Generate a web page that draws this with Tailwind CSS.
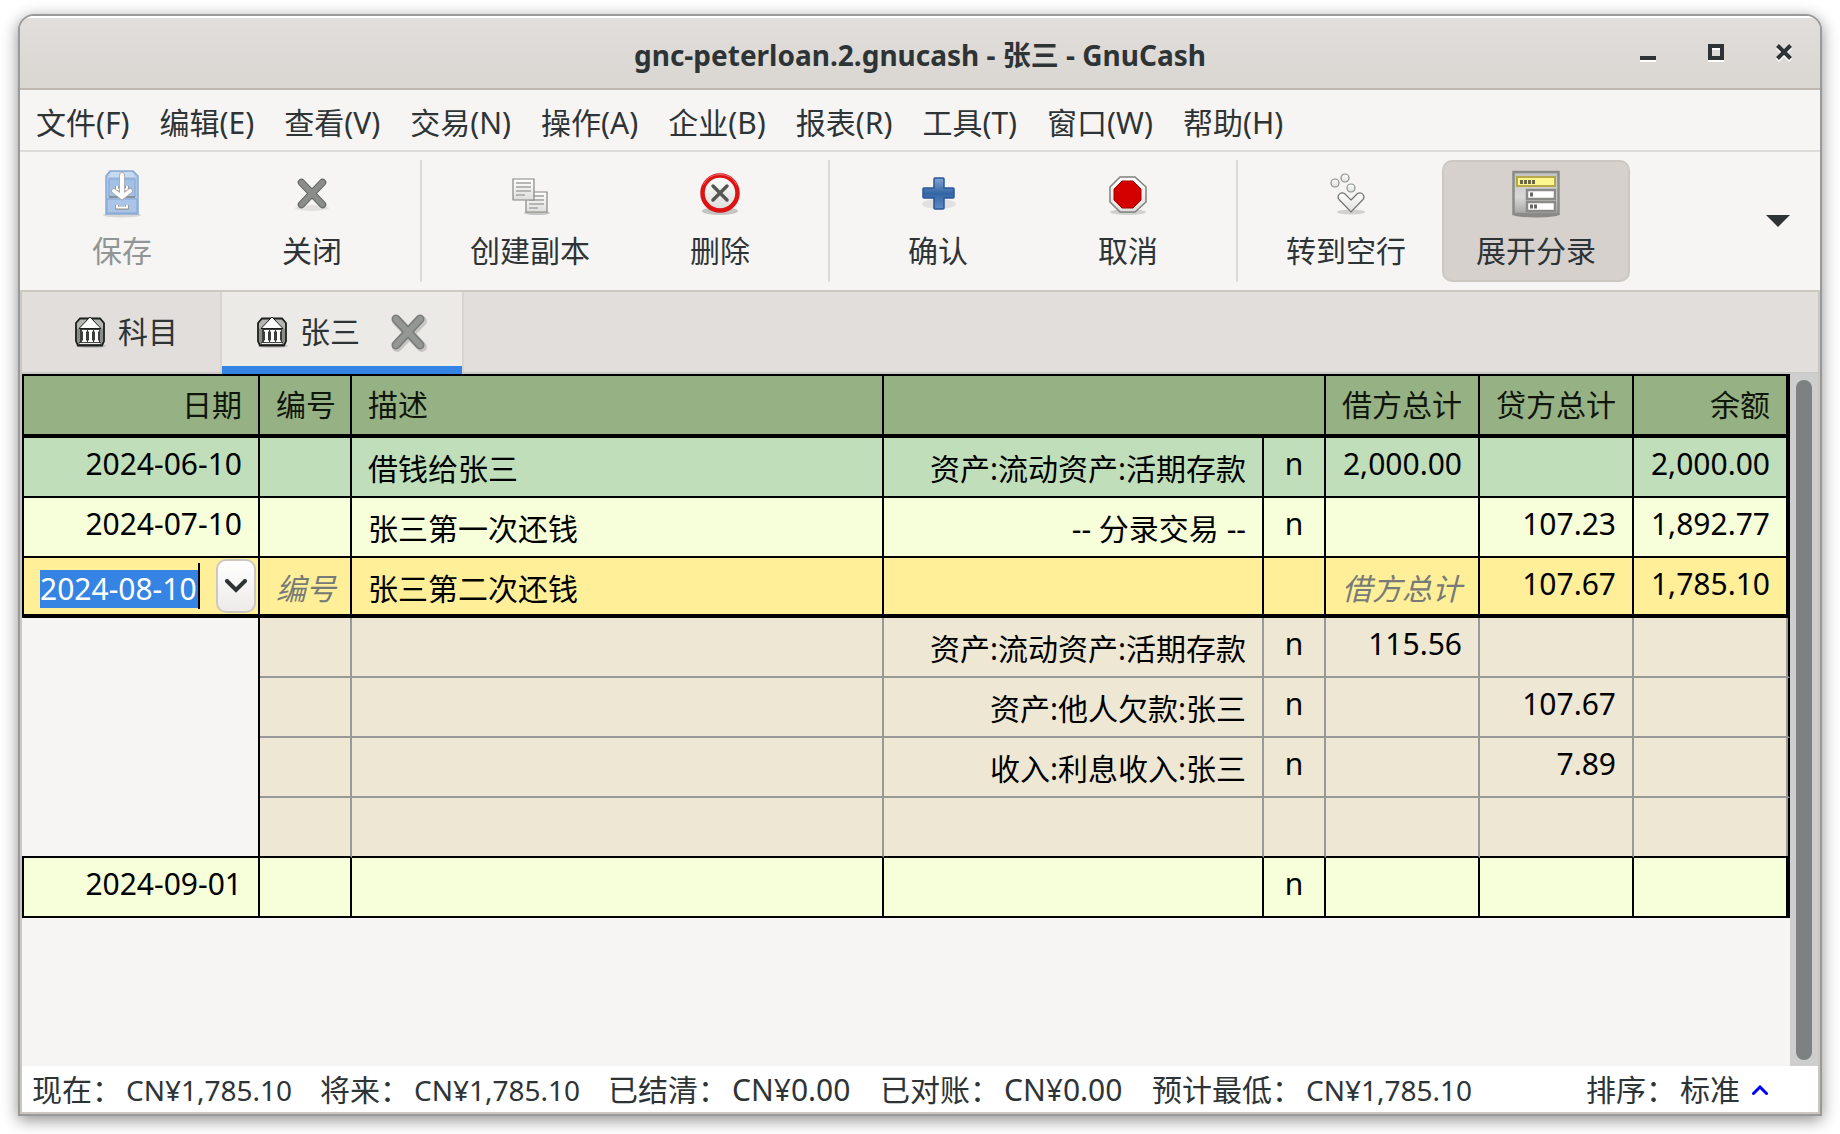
<!DOCTYPE html>
<html lang="zh-CN">
<head>
<meta charset="utf-8">
<title>gnc-peterloan.2.gnucash - 张三 - GnuCash</title>
<script src="https://cdn.jsdelivr.net/npm/@tailwindcss/browser@4"></script>
</head>
<body class="bg-white font-['Noto_Sans','Noto_Sans_CJK_SC',sans-serif] text-[30px] leading-10 text-[#2e3436]">
<svg class="absolute size-0" aria-hidden="true">
  <defs>
    <linearGradient id="gp" x1="0" y1="0" x2="0" y2="1"><stop offset="0" stop-color="#83a6d4"/><stop offset=".5" stop-color="#3465a4"/><stop offset="1" stop-color="#5d8ac4"/></linearGradient>
    <linearGradient id="gg" x1="0" y1="0" x2="0" y2="1"><stop offset="0" stop-color="#fff"/><stop offset="1" stop-color="#dededc"/></linearGradient>
    <linearGradient id="gs" x1="0" y1="0" x2="0" y2="1"><stop offset="0" stop-color="#c2c3c1"/><stop offset=".6" stop-color="#d8d9d7"/><stop offset="1" stop-color="#a5a6a4"/></linearGradient>
    <symbol id="bank" viewBox="0 0 32 32">
      <ellipse cx="17" cy="30" rx="15" ry="2" fill="#000" opacity=".15"/>
      <path d="M6 2.500H26L30 7V25L28 29.500H4L2 25V7Z" fill="#b4b6b1" stroke="#1c1e1c" stroke-width="1.800"/>
      <path d="M3 13H29V26H3Z" fill="#3c3e3b"/>
      <path d="M3 13H6V26H3ZM26 13H29V26H26Z" fill="#8a8c87"/>
      <path d="M16 1L27 12.500H5Z" fill="#fff" stroke="#1c1e1c" stroke-width="1"/>
      <path d="M8 14H13V15.500H12V24.500H13V26H8V24.500H9V15.500H8ZM14 14H19V15.500H18V24.500H19V26H14V24.500H15V15.500H14ZM20 14H25V15.500H24V24.500H25V26H20V24.500H21V15.500H20Z" fill="#fff"/>
      <path d="M5 26.500H27V28.500H5Z" fill="#eee" stroke="#1c1e1c" stroke-width=".8"/>
    </symbol>
  </defs>
</svg>
<div class="min-h-screen flex px-[18px] pt-[14px] pb-[18px]">
  <div class="flex-1 min-w-0 flex flex-col border-2 border-[#999] rounded-t-2xl overflow-hidden bg-[#f6f5f4] shadow-[0_4px_16px_rgba(0,0,0,0.45)]">
    <header class="h-[74px] shrink-0 grid grid-cols-[1fr_auto_1fr] items-center border-t-2 border-t-white border-b-2 border-b-[#bfb8b1] bg-linear-to-b from-[#e1dedb] to-[#dad6d2]">
      <span></span>
      <h1 class="text-[28px] font-bold pt-1">gnc-peterloan.2.gnucash - 张三 - GnuCash</h1>
      <div class="flex justify-end gap-9 pr-5">
        <button aria-label="最小化" class="size-8 grid place-items-center"><svg width="16" height="18" viewBox="0 0 16 18"><path d="M0 14H16V18H0Z" fill="#fff"/><path d="M0 12H16V16H0Z" fill="#2e3436"/></svg></button>
        <button aria-label="最大化" class="size-8 grid place-items-center"><svg width="16" height="18" viewBox="0 0 16 18"><path d="M2 4H14V16H2Z" fill="none" stroke="#fff" stroke-width="4"/><path d="M2 2H14V14H2Z" fill="none" stroke="#2e3436" stroke-width="4"/></svg></button>
        <button aria-label="关闭窗口" class="size-8 grid place-items-center"><svg width="16" height="18" viewBox="0 0 16 18"><path d="M1.500 3.500L14.500 16.500M14.500 3.500L1.500 16.500" stroke="#fff" stroke-width="4"/><path d="M1.500 1.500L14.500 14.500M14.500 1.500L1.500 14.500" stroke="#2e3436" stroke-width="4"/></svg></button>
      </div>
    </header>
    <nav class="h-[62px] shrink-0 flex items-center gap-[30px] pl-4 pt-1.5 border-b-2 border-[#dddbd8] whitespace-nowrap">
      <button>文件(F)</button><button>编辑(E)</button><button>查看(V)</button><button>交易(N)</button><button>操作(A)</button><button>企业(B)</button><button>报表(R)</button><button>工具(T)</button><button>窗口(W)</button><button>帮助(H)</button>
    </nav>
    <div class="h-[140px] shrink-0 flex items-start gap-0.5 pl-2 pr-[30px] pt-2 border-b-2 border-[#cdc9c0] whitespace-nowrap">
      <button disabled class="w-[188px] h-[122px] flex flex-col items-center gap-[13px] pt-2.5 text-[#929595]">
        <svg width="48" height="48" viewBox="0 0 48 48"><ellipse cx="24" cy="45" rx="19" ry="2.500" fill="#000" opacity=".12"/><path d="M12 1H35L40 6V44H8V6Z" fill="#aac5e8" stroke="#8aaad4" stroke-width="1.500"/><path d="M13 2H34L38 7H10Z" fill="#c8daf0"/><path d="M11 9H37V27H11Z" fill="#a3c0e6" stroke="#86a7d3"/><path d="M11 27H37" stroke="#85909c" stroke-width="2"/><path d="M9 29H39V43H9Z" fill="#aac5e8" stroke="#86a7d3"/><path d="M19 16V20H29V16M19 35V38H29V35" fill="none" stroke="#918f88" stroke-width="3.500"/><path d="M19 16V19.500H29V16M19 35V37.500H29V35" fill="none" stroke="#fff" stroke-width="2"/><path d="M24 5V25M16 21L24 27L32 21" fill="none" stroke="#a9a8a3" stroke-width="5.500" stroke-linecap="round"/><path d="M24 5V25M16 21L24 27L32 21" fill="none" stroke="#fff" stroke-width="4" stroke-linecap="round"/></svg>
        <span>保存</span></button>
      <button class="w-[188px] h-[122px] flex flex-col items-center gap-[13px] pt-2.5">
        <svg width="48" height="48" viewBox="0 0 48 48"><ellipse cx="24" cy="38" rx="17" ry="3" fill="#000" opacity=".08"/><path d="M13.500 12.500L34.500 34.500M34.500 12.500L13.500 34.500" stroke="#5c5e5a" stroke-width="7.500" stroke-linecap="round"/><path d="M13.500 12.500L34.500 34.500M34.500 12.500L13.500 34.500" stroke="#8b8d89" stroke-width="5.500" stroke-linecap="round"/></svg>
        <span>关闭</span></button>
      <div class="w-0.5 h-[122px] mx-3 bg-[#dddbd8]"></div>
      <button class="w-[188px] h-[122px] flex flex-col items-center gap-[13px] pt-2.5">
        <svg width="48" height="48" viewBox="0 0 48 48"><ellipse cx="31" cy="43" rx="13" ry="2" fill="#000" opacity=".2"/><path d="M20 22H41V42H20Z" fill="url(#gg)" stroke="#85877f" stroke-width="1.200"/><path d="M23 26H38M23 30H38M23 34H38M23 38H32" stroke="#b5b6b3" stroke-width="2"/><path d="M7 9H28V30H7Z" fill="url(#gg)" stroke="#85877f" stroke-width="1.200"/><path d="M10 13H25M10 17H25M10 21H25M10 25H19" stroke="#b5b6b3" stroke-width="2"/></svg>
        <span>创建副本</span></button>
      <button class="w-[188px] h-[122px] flex flex-col items-center gap-[13px] pt-2.5">
        <svg width="48" height="48" viewBox="0 0 48 48"><ellipse cx="24" cy="41" rx="18" ry="4" fill="#000" opacity=".2"/><circle cx="24" cy="23" r="17.500" fill="url(#gg)" stroke="#dc1414" stroke-width="4.500"/><path d="M7 15A19 19 0 0 1 41 15" fill="none" stroke="#f06a6a" stroke-width="1"/><path d="M17 16L31 30M31 16L17 30" stroke="#555753" stroke-width="3.500" stroke-linecap="round"/></svg>
        <span>删除</span></button>
      <div class="w-0.5 h-[122px] mx-3 bg-[#dddbd8]"></div>
      <button class="w-[188px] h-[122px] flex flex-col items-center gap-[13px] pt-2.5">
        <svg width="48" height="48" viewBox="0 0 48 48"><ellipse cx="25" cy="34" rx="17" ry="5" fill="#000" opacity=".08"/><path d="M21 8H29Q30 8 30 9V18H39Q40 18 40 19V27Q40 28 39 28H30V38Q30 39 29 39H21Q20 39 20 38V28H10Q9 28 9 27V19Q9 18 10 18H20V9Q20 8 21 8Z" fill="url(#gp)" stroke="#2a5596" stroke-width="1.500"/></svg>
        <span>确认</span></button>
      <button class="w-[188px] h-[122px] flex flex-col items-center gap-[13px] pt-2.5">
        <svg width="48" height="48" viewBox="0 0 48 48"><ellipse cx="24" cy="42" rx="18" ry="3" fill="#000" opacity=".15"/><path d="M16 7H31L42 17V32L31 42H16L6 32V17Z" fill="url(#gg)" stroke="#7e807c" stroke-width="1.500"/><path d="M18 11H29L37 19V30L29 38H18L10 30V19Z" fill="#d40000" stroke="#a40000"/></svg>
        <span>取消</span></button>
      <div class="w-0.5 h-[122px] mx-3 bg-[#dddbd8]"></div>
      <button class="w-[188px] h-[122px] flex flex-col items-center gap-[13px] pt-2.5">
        <svg width="48" height="48" viewBox="0 0 48 48"><ellipse cx="29" cy="42" rx="14" ry="2.500" fill="#000" opacity=".15"/><g fill="url(#gg)" stroke="#8b8d89" stroke-width="1.200"><circle cx="13" cy="13" r="4"/><circle cx="23" cy="8" r="4"/><circle cx="29" cy="18" r="4"/><path d="M29 30L35.500 23.500Q39 22 41 24.500Q43 27 41 29.500L29 42L17 29.500Q15 27 17 24.500Q19 22 22.500 23.500Z" stroke="#6f716d"/></g></svg>
        <span>转到空行</span></button>
      <button aria-pressed="true" class="w-[188px] h-[122px] flex flex-col items-center gap-[13px] pt-2 rounded-[10px] border-2 border-[#cdc7c2] bg-[#d6d1cd]">
        <svg width="48" height="48" viewBox="0 0 48 48"><path d="M1 43H47L45 46Q24 49 3 46Z" fill="#000" opacity=".35"/><path d="M1.500 2H46.500V44H1.500Z" fill="url(#gs)" stroke="#8a8b89" stroke-width="2.500"/><path d="M5 7H43V16H5Z" fill="#fdf790" stroke="#b5a94c" stroke-width="2"/><path d="M15 20H43V29H15ZM15 32H43V41H15Z" fill="#fff" stroke="#8a8b89" stroke-width="2.500"/><path d="M8 12H24" stroke="#6b6840" stroke-width="4" stroke-dasharray="3 1"/><path d="M18 24.500H22M18 36.500H26" stroke="#666" stroke-width="4" stroke-dasharray="3 1"/></svg>
        <span>展开分录</span></button>
      <button aria-label="更多工具" class="ml-auto h-[122px] flex items-center"><svg width="24" height="12" viewBox="0 0 24 12"><path d="M0 0H24L12 12Z" fill="#2e3436"/></svg></button>
    </div>
    <div class="flex-1 flex flex-col border-x-2 border-b-2 border-[#cdc7c2]">
      <div role="tablist" class="h-[82px] shrink-0 flex bg-[#e1dedb] border-b-2 border-[#cdc9c4]">
        <button role="tab" class="w-[200px] h-20 flex items-center gap-3 pl-[52px] border-r-2 border-[#d8d4d0]"><svg width="32" height="32"><use href="#bank"/></svg><span>科目</span></button>
        <div role="tab" aria-selected="true" class="w-[240px] h-[82px] flex items-center gap-3 pl-[34px] pt-1.5 bg-[#ebeae6] border-b-8 border-[#3584e4]">
          <svg width="32" height="32"><use href="#bank"/></svg><span>张三</span>
          <button aria-label="关闭标签" class="ml-4"><svg width="40" height="40" viewBox="0 0 40 40"><path d="M9 9L34 35M34 9L9 35" stroke="#000" opacity=".15" stroke-width="10" stroke-linecap="round"/><path d="M8 7L32 33M32 7L8 33" stroke="#777976" stroke-width="9" stroke-linecap="round"/><path d="M8 7L32 33M32 7L8 33" stroke="#959794" stroke-width="6" stroke-linecap="round"/></svg></button>
        </div>
        <div class="w-0.5 h-20 bg-[#d8d4d0]"></div>
      </div>
      <div class="flex-1 flex">
        <div class="flex-1 min-w-0">
          <table class="w-full table-fixed border-separate border-spacing-0 text-black whitespace-nowrap [&_tr]:h-[60px] [&_td]:p-0 [&_td]:px-4 [&_td]:align-top [&_td]:border-black [&_td]:border-r-2 [&_td]:border-b-2 [&_.split_td]:border-[#999] [&_.num]:text-right [&_.num]:pt-[6px] [&_.cjk]:pt-[11px]">
            <colgroup><col class="w-[238px]"><col class="w-[92px]"><col><col class="w-[380px]"><col class="w-[62px]"><col class="w-[154px]"><col class="w-[154px]"><col class="w-[156px]"></colgroup>
            <thead>
              <tr class="bg-[#96b183] text-[#10160c] [&_th]:h-[64px] [&_th]:p-0 [&_th]:px-4 [&_th]:font-normal [&_th]:border-black [&_th]:border-t-2 [&_th]:border-b-4 [&_th]:border-r-2">
                <th class="text-right border-l-2">日期</th><th class="text-left">编号</th><th class="text-left">描述</th><th colspan="2"></th><th class="text-left">借方总计</th><th class="text-left">贷方总计</th><th class="text-right !border-r-4">余额</th>
              </tr>
            </thead>
            <tbody>
              <tr class="bg-[#bfdeb9]"><td class="num border-l-2">2024-06-10</td><td></td><td class="cjk">借钱给张三</td><td class="cjk text-right">资产:流动资产:活期存款</td><td class="num !text-center">n</td><td class="num">2,000.00</td><td></td><td class="num !border-r-4">2,000.00</td></tr>
              <tr class="bg-[#f6ffda]"><td class="num border-l-2">2024-07-10</td><td></td><td class="cjk">张三第一次还钱</td><td class="cjk text-right">-- 分录交易 --</td><td class="num !text-center">n</td><td></td><td class="num">107.23</td><td class="num !border-r-4">1,892.77</td></tr>
              <tr class="bg-[#ffef98] [&_td]:!border-b-4">
                <td class="!pl-4 !pr-0.5 border-l-2">
                  <div class="h-14 flex items-center">
                    <input aria-label="日期" value="2024-08-10" class="w-[158px] h-[38px] mt-1.5 bg-[#3584e4] text-white outline-none">
                    <span class="w-0.5 h-[46px] bg-black"></span>
                    <button aria-label="选择日期" class="ml-auto w-10 h-[54px] grid place-items-center rounded-[10px] border-2 border-[#cdc7c2] bg-linear-to-b from-white to-[#edebe9]"><svg width="22" height="14" viewBox="0 0 22 14"><path d="M2 2L11 11L20 2" fill="none" stroke="#2e3436" stroke-width="4" stroke-linecap="round"/></svg></button>
                  </div>
                </td>
                <td class="cjk !pr-0"><input aria-label="编号" placeholder="编号" class="block w-full h-10 italic outline-none placeholder:text-[#777a77]"></td><td class="cjk">张三第二次还钱</td><td></td><td></td>
                <td class="cjk !pr-0"><input aria-label="借方总计" placeholder="借方总计" class="block w-full h-10 italic outline-none placeholder:text-[#777a77]"></td><td class="num">107.67</td><td class="num !border-r-4">1,785.10</td></tr>
              <tr class="split bg-[#ede7d3]"><td rowspan="4" class="bg-[#f6f5f4] !border-black"></td><td></td><td></td><td class="cjk text-right">资产:流动资产:活期存款</td><td class="num !text-center">n</td><td class="num">115.56</td><td></td><td class="!border-r-black shadow-[inset_-2px_0_0_#999]"></td></tr>
              <tr class="split bg-[#ede7d3]"><td></td><td></td><td class="cjk text-right">资产:他人欠款:张三</td><td class="num !text-center">n</td><td></td><td class="num">107.67</td><td class="!border-r-black shadow-[inset_-2px_0_0_#999]"></td></tr>
              <tr class="split bg-[#ede7d3]"><td></td><td></td><td class="cjk text-right">收入:利息收入:张三</td><td class="num !text-center">n</td><td></td><td class="num">7.89</td><td class="!border-r-black shadow-[inset_-2px_0_0_#999]"></td></tr>
              <tr class="split bg-[#ede7d3] [&_td]:!border-b-black"><td></td><td></td><td></td><td></td><td></td><td></td><td class="!border-r-black shadow-[inset_-2px_0_0_#999]"></td></tr>
              <tr class="bg-[#f6ffda]"><td class="num border-l-2">2024-09-01</td><td></td><td></td><td></td><td class="num !text-center">n</td><td></td><td></td><td class="!border-r-4"></td></tr>
            </tbody>
          </table>
        </div>
        <div class="w-7 shrink-0 flex bg-[#cecece] py-1.5 pl-1.5"><div class="w-4 rounded-full bg-[#7e8181]"></div></div>
      </div>
      <footer class="h-[46px] shrink-0 flex items-center gap-[26px] pt-0.5 pl-2.5 pr-[50px] bg-white whitespace-nowrap">
        <div class="flex gap-1"><span>现在：</span><span class="w-[168px] text-[28px]">CN¥1,785.10</span></div>
        <div class="flex gap-1"><span>将来：</span><span class="w-[168px] text-[28px]">CN¥1,785.10</span></div>
        <div class="flex gap-1"><span>已结清：</span><span class="w-[122px]">CN¥0.00</span></div>
        <div class="flex gap-1"><span>已对账：</span><span class="w-[122px]">CN¥0.00</span></div>
        <div class="flex gap-1"><span>预计最低：</span><span class="w-[168px] text-[28px]">CN¥1,785.10</span></div>
        <div class="ml-auto flex items-center gap-1"><span>排序：</span><span>标准</span><svg class="ml-2" width="16" height="10" viewBox="0 0 16 10"><path d="M1.500 8.500L8 2L14.500 8.500" fill="none" stroke="#00f" stroke-width="3" stroke-linecap="round"/></svg></div>
      </footer>
    </div>
  </div>
</div>
</body>
</html>
